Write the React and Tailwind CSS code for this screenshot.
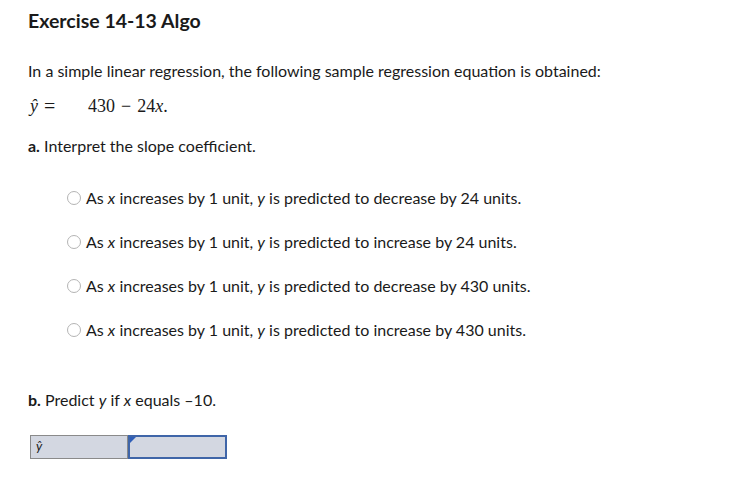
import React from "react";

const options = [
  "decrease by 24 units.",
  "increase by 24 units.",
  "decrease by 430 units.",
  "increase by 430 units.",
];

export default function App() {
  return (
    <div className="w-[739px] h-[503px] bg-white text-[#1a1a1a] font-['Lato','Open_Sans',sans-serif] relative">
      <div className="pl-[28px] pt-[9px]">
        <h1 className="text-[19.5px] font-bold leading-[24px]">Exercise 14-13 Algo</h1>

        <p className="mt-[28px] text-[16px] leading-[20px]">
          In a simple linear regression, the following sample regression equation is obtained:
        </p>

        <div className="mt-[14px] flex items-center font-['Liberation_Serif',serif] text-[18px] leading-[22px]">
          <span className="w-[60px] flex items-center">
            <i className="ml-[2px]">ŷ</i>
            <span className="ml-[6px] text-[20px]">=</span>
          </span>
          <span>
            430<span className="mx-[6px]">−</span>24<i>x</i>.
          </span>
        </div>

        <p className="mt-[19px] text-[16px] leading-[20px]">
          <b>a.</b> Interpret the slope coefficient.
        </p>

        <div className="mt-[32px] pl-[39px] flex flex-col gap-[24px]">
          {options.map((o, i) => (
            <label key={i} className="flex items-center text-[16px] leading-[20px]">
              <span className="w-[14px] h-[14px] rounded-full border border-[#b4b4b4] bg-white mr-[5px]" />
              As&nbsp;<i>x</i>&nbsp;increases by 1 unit,&nbsp;<i>y</i>&nbsp;is predicted to {o}
            </label>
          ))}
        </div>

        <p className="mt-[50px] text-[16px] leading-[20px]">
          <b>b.</b> Predict <i>y</i> if <i>x</i> equals –10.
        </p>

        <div className="mt-[25px] ml-[2px] flex w-[197px] h-[24px]">
          <div className="w-[98px] h-full bg-[#d3d7e1] border border-[#8a8a8a] flex items-center pl-[5px] italic text-[13px]">
            ŷ
          </div>
          <div className="relative flex-1 h-full bg-[#d3d7e1] border-2 border-[#3f65a8]">
            <span className="absolute left-0 top-0 w-0 h-0 border-t-[6px] border-t-[#2f5eb8] border-r-[6px] border-r-transparent" />
          </div>
        </div>
      </div>
    </div>
  );
}
